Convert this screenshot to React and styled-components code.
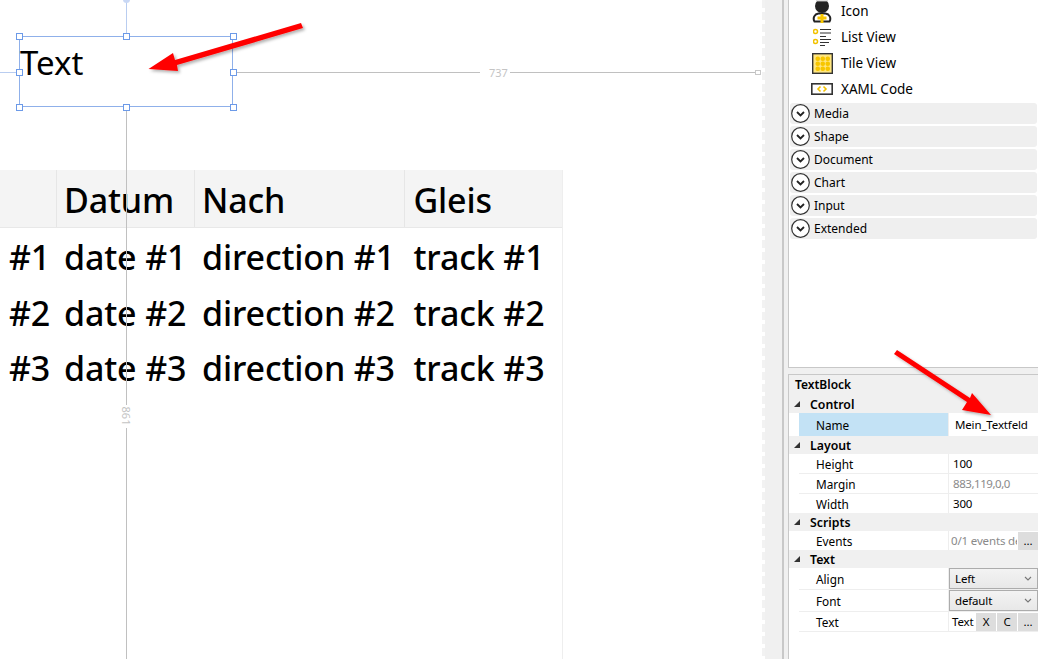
import React from "react";
import styled, { createGlobalStyle } from "styled-components";

const GlobalStyle = createGlobalStyle`
  html, body {
    margin: 0;
    padding: 0;
    background: #fff;
    overflow: hidden;
  }
  body {
    font-family: "Noto Sans", "Open Sans", sans-serif;
    color: #000;
  }
`;

const HANDLES = [
  [0, 0],
  [107, 0],
  [214, 0],
  [0, 36],
  [214, 36],
  [0, 71],
  [107, 71],
  [214, 71],
];

const COLUMNS = [
  { title: "", cell: "", width: 57, pad: 9 },
  { title: "Datum", cell: "date", width: 138, pad: 7 },
  { title: "Nach", cell: "direction", width: 210, pad: 7 },
  { title: "Gleis", cell: "track", width: 158, pad: 8.5 },
];

const TOOLS = [
  { name: "Icon", icon: <PersonIcon /> },
  { name: "List View", icon: <ListIcon /> },
  { name: "Tile View", icon: <TileIcon /> },
  { name: "XAML Code", icon: <CodeIcon /> },
];

const GROUPS = ["Media", "Shape", "Document", "Chart", "Input", "Extended"];

function PersonIcon() {
  return (
    <svg width="20" height="24" viewBox="0 0 20 24">
      <circle cx="10" cy="7" r="7" fill="#222" />
      <rect x="4" y="1" width="12" height="1.4" fill="#ddd" />
      <path
        d="M2.500 22.500c-2-3.500 0-7.500 4-8h7c4 .5 6 4.500 4 8z"
        fill="#fff"
        stroke="#222"
        strokeWidth="2"
      />
      <path d="M8.500 15h3v2.500h3v3h-3v3.500h-3v-3.500h-3v-3h3z" fill="#f7c600" />
    </svg>
  );
}

function ListIcon() {
  return (
    <svg width="18" height="18" viewBox="0 0 18 18">
      <circle cx="2.500" cy="3.500" r="2" fill="#fff" stroke="#f2c200" strokeWidth="1.500" />
      <circle cx="2.500" cy="13.500" r="2" fill="#fff" stroke="#f2c200" strokeWidth="1.500" />
      <path
        d="M7 1.500h11M7 5h11M7 8.500h6M7 11.500h11M7 14.500h9M7 17.500h5"
        stroke="#333"
        strokeWidth="1.200"
      />
    </svg>
  );
}

function TileIcon() {
  const dots = [];
  for (let r = 0; r < 3; r++) {
    for (let c = 0; c < 3; c++) {
      dots.push(<rect key={`${r}-${c}`} x={3.5 + c * 5} y={3.5 + r * 5} width="4.500" height="4.500" rx="2" fill="#f7c600" />);
    }
  }
  return (
    <svg width="21" height="21" viewBox="0 0 21 21">
      <rect x=".7" y=".7" width="19.600" height="19.600" fill="#ffe680" stroke="#333" strokeWidth="1.400" />
      {dots}
    </svg>
  );
}

function CodeIcon() {
  return (
    <svg width="22" height="12" viewBox="0 0 22 12">
      <rect x=".8" y=".8" width="20.400" height="10.400" fill="#fff" stroke="#333" strokeWidth="1.600" />
      <path d="M9.500 3.500L7 6l2.500 2.500M12.500 3.500L15 6l-2.500 2.500" fill="none" stroke="#f2c200" strokeWidth="1.600" />
    </svg>
  );
}

function ExpandIcon() {
  return (
    <svg width="19" height="19" viewBox="0 0 19 19">
      <circle cx="9.500" cy="9.500" r="8.800" fill="#fff" stroke="#333" strokeWidth="1.200" />
      <path d="M6 8l3.500 3.500L13 8" fill="none" stroke="#222" strokeWidth="1.800" />
    </svg>
  );
}

function Triangle() {
  return (
    <svg width="6" height="6" viewBox="0 0 6 6">
      <path d="M6 0v6H0z" fill="#333" />
    </svg>
  );
}

function Chevron() {
  return (
    <svg width="8" height="5" viewBox="0 0 8 5">
      <path d="M1 1l3 3 3-3" fill="none" stroke="#777" strokeWidth="1.100" />
    </svg>
  );
}

export default function App() {
  return (
    <Page>
      <GlobalStyle />
      <Canvas>
        <GuideV $top={0} $height={36} $color="#b9cdf0" />
        <GuideDot />
        <GuideH $left={0} $width={19} $top={72} $color="#b9cdf0" />
        <GuideH $left={233} $width={247} $top={72} />
        <GuideLabel $left={489} $top={65}>737</GuideLabel>
        <GuideH $left={510} $width={247} $top={72} />
        <GuideEnd />

        <Table>
          <HeaderRow>
            {COLUMNS.map((col) => (
              <HeaderCell key={col.width} $width={col.width} $pad={col.pad}>{col.title}</HeaderCell>
            ))}
          </HeaderRow>
          {[1, 2, 3].map((n) => (
            <BodyRow key={n}>
              {COLUMNS.map((col) => (
                <BodyCell key={col.width} $width={col.width} $pad={col.pad}>
                  {col.cell ? `${col.cell} #${n}` : `#${n}`}
                </BodyCell>
              ))}
            </BodyRow>
          ))}
        </Table>

        <GuideV $top={107} $height={298} />
        <GuideLabelV>861</GuideLabelV>
        <GuideV $top={428} $height={231} />

        <Selection>
          <SelectionText>Text</SelectionText>
          {HANDLES.map(([x, y]) => (
            <Handle key={`${x}-${y}`} style={{ left: x - 4, top: y - 4 }} />
          ))}
        </Selection>
      </Canvas>

      <DashedEdge />
      <Splitter />

      <Side>
        <Toolbox>
          <ToolList>
            {TOOLS.map((tool) => (
              <ToolRow key={tool.name}>
                <ToolIcon>{tool.icon}</ToolIcon>
                <span>{tool.name}</span>
              </ToolRow>
            ))}
          </ToolList>
          <Groups>
            {GROUPS.map((group) => (
              <GroupRow key={group}>
                <ExpandIcon />
                <span>{group}</span>
              </GroupRow>
            ))}
          </Groups>
        </Toolbox>

        <Properties>
          <PropTitle>TextBlock</PropTitle>

          <Section>
            <Triangle />
            <span>Control</span>
          </Section>
          <PropRow $height={23} $last>
            <PropName $selected>Name</PropName>
            <PropValue $pad={6}>Mein_Textfeld</PropValue>
          </PropRow>

          <Section>
            <Triangle />
            <span>Layout</span>
          </Section>
          <PropRow>
            <PropName>Height</PropName>
            <PropValue>100</PropValue>
          </PropRow>
          <PropRow>
            <PropName>Margin</PropName>
            <PropValue $muted $tight>883,119,0,0</PropValue>
          </PropRow>
          <PropRow $height={19} $last>
            <PropName>Width</PropName>
            <PropValue>300</PropValue>
          </PropRow>

          <Section>
            <Triangle />
            <span>Scripts</span>
          </Section>
          <PropRow $height={19} $last>
            <PropName>Events</PropName>
            <PropValue $pad={2} $muted>
              <EventsText>0/1 events de</EventsText>
              <SmallButton>...</SmallButton>
            </PropValue>
          </PropRow>

          <Section>
            <Triangle />
            <span>Text</span>
          </Section>
          <PropRow $height={22}>
            <PropName>Align</PropName>
            <PropValue $pad={0}>
              <Select>Left<Chevron /></Select>
            </PropValue>
          </PropRow>
          <PropRow $height={22}>
            <PropName>Font</PropName>
            <PropValue $pad={0}>
              <Select>default<Chevron /></Select>
            </PropValue>
          </PropRow>
          <PropRow $height={20}>
            <PropName>Text</PropName>
            <PropValue $pad={3}>
              <InlineText>Text</InlineText>
              <SmallButton>X</SmallButton>
              <SmallButton>C</SmallButton>
              <SmallButton>...</SmallButton>
            </PropValue>
          </PropRow>
        </Properties>
      </Side>

      <Arrows width="1038" height="659" viewBox="0 0 1038 659">
        <defs>
          <filter id="arrowShadow" x="-10%" y="-10%" width="130%" height="130%">
            <feDropShadow dx="2" dy="2" stdDeviation="1.500" floodColor="#000" floodOpacity=".3" />
          </filter>
        </defs>
        <path
          d="M301 23L303 28L177 65L178 71L148.500 69L173 53L175 60Z"
          fill="#f00"
          filter="url(#arrowShadow)"
        />
        <path
          d="M897 350L894 354L967 402L962 410L991 415L972 393L970 398Z"
          fill="#f00"
          filter="url(#arrowShadow)"
        />
      </Arrows>
    </Page>
  );
}

const Page = styled.div`
  position: relative;
  display: flex;
  width: 1038px;
  height: 659px;
  overflow: hidden;
  background: #fff;
`;

const Canvas = styled.div`
  position: relative;
  flex: 0 0 762px;
  height: 100%;
  overflow: hidden;
`;

const GuideV = styled.div`
  position: absolute;
  left: 126px;
  top: ${(p) => p.$top}px;
  width: 1px;
  height: ${(p) => p.$height}px;
  background: ${(p) => p.$color || "#c0c0c0"};
`;

const GuideH = styled.div`
  position: absolute;
  left: ${(p) => p.$left}px;
  top: ${(p) => p.$top}px;
  width: ${(p) => p.$width}px;
  height: 1px;
  background: ${(p) => p.$color || "#c0c0c0"};
`;

const GuideDot = styled.div`
  position: absolute;
  left: 123px;
  top: -4px;
  width: 7px;
  height: 7px;
  border-radius: 50%;
  background: #c9d8f5;
`;

const GuideEnd = styled.div`
  position: absolute;
  left: 755px;
  top: 70px;
  width: 4px;
  height: 3px;
  border: 1px solid #c8c8c8;
  background: #fff;
`;

const GuideLabel = styled.div`
  position: absolute;
  left: ${(p) => p.$left}px;
  top: ${(p) => p.$top}px;
  font-size: 11px;
  line-height: 16px;
  color: #c4c4c4;
`;

const GuideLabelV = styled(GuideLabel)`
  left: 117px;
  top: 408px;
  transform: rotate(90deg);
`;

const Table = styled.div`
  position: absolute;
  left: 0;
  top: 170px;
  width: 563px;
  height: 489px;
  border-right: 1px solid #eeeeee;
  box-sizing: border-box;
  font-size: 34px;
  font-weight: 500;
  letter-spacing: -0.15px;
`;

const HeaderRow = styled.div`
  display: flex;
  height: 58px;
  background: #f4f4f4;
  border-bottom: 1px solid #e8e8e8;
  box-sizing: border-box;
`;

const HeaderCell = styled.div`
  flex: 0 0 ${(p) => p.$width}px;
  box-sizing: border-box;
  padding-left: ${(p) => p.$pad}px;
  line-height: 60px;
  border-right: 1px solid #e6e6e6;
  white-space: nowrap;
  &:last-child {
    border-right: none;
  }
`;

const BodyRow = styled.div`
  display: flex;
  height: 55.5px;
`;

const BodyCell = styled.div`
  flex: 0 0 ${(p) => p.$width}px;
  box-sizing: border-box;
  padding-left: ${(p) => p.$pad}px;
  line-height: 58px;
  white-space: nowrap;
`;

const Selection = styled.div`
  position: absolute;
  left: 19px;
  top: 36px;
  width: 212px;
  height: 69px;
  border: 1px solid #8fb0ea;
`;

const SelectionText = styled.div`
  font-size: 33px;
  line-height: 52px;
`;

const Handle = styled.div`
  position: absolute;
  width: 5px;
  height: 5px;
  border: 1px solid #6c9ae8;
  background: #fff;
`;

const DashedEdge = styled.div`
  flex: 0 0 3px;
  background: repeating-linear-gradient(#f2f2f2 0 8px, #fff 8px 12px);
`;

const Splitter = styled.div`
  flex: 0 0 23px;
  box-sizing: border-box;
  background: linear-gradient(to right, #f0f0f0 17px, #c8c8c8 17px 19px, #f0f0f0 19px);
`;

const Side = styled.div`
  flex: 1;
  display: flex;
  flex-direction: column;
  min-width: 0;
  background: #f0f0f0;
  font-size: 13.500px;
`;

const Toolbox = styled.div`
  height: 368px;
  box-sizing: border-box;
  padding-left: 1px;
  background: #fff;
  border-left: 1px solid #c8c8c8;
  border-bottom: 1px solid #c8c8c8;
`;

const ToolList = styled.div`
  display: flex;
  flex-direction: column;
  margin-top: -2px;
`;

const ToolRow = styled.div`
  display: flex;
  align-items: center;
  gap: 8px;
  height: 26px;
  padding-left: 21px;
`;

const ToolIcon = styled.div`
  flex: 0 0 22px;
  display: flex;
  justify-content: center;
  align-items: center;
`;

const Groups = styled.div`
  display: flex;
  flex-direction: column;
  gap: 2px;
  margin: 1px 1px 0 0;
`;

const GroupRow = styled.div`
  display: flex;
  align-items: center;
  gap: 4px;
  height: 21px;
  padding-left: 1px;
  border-radius: 3px;
  background: #efefef;
  font-size: 12px;
`;

const Properties = styled.div`
  flex: 1;
  margin-top: 6px;
  background: #fff;
  border-left: 1px solid #c8c8c8;
  border-top: 1px solid #c8c8c8;
  font-size: 11.800px;
`;

const PropTitle = styled.div`
  height: 20px;
  padding-left: 6px;
  line-height: 20px;
  font-size: 12px;
  font-weight: 600;
  background: #f0f0f0;
`;

const Section = styled.div`
  display: flex;
  align-items: center;
  gap: 10px;
  height: 18px;
  padding-left: 5px;
  background: #f0f0f0;
  font-size: 12.300px;
  font-weight: 600;
`;

const PropRow = styled.div`
  display: flex;
  height: ${(p) => p.$height || 20}px;
  margin-left: 10px;
  box-sizing: border-box;
  border-bottom: ${(p) => (p.$last ? "none" : "1px solid #eeeeee")};
`;

const PropName = styled.div`
  flex: 0 0 150px;
  box-sizing: border-box;
  padding-left: 17px;
  display: flex;
  align-items: center;
  border-right: 1px solid #eeeeee;
  background: ${(p) => (p.$selected ? "#c3e2f5" : "transparent")};
`;

const PropValue = styled.div`
  flex: 1;
  min-width: 0;
  display: flex;
  align-items: center;
  padding-left: ${(p) => (p.$pad === undefined ? 4 : p.$pad)}px;
  font-size: 11.500px;
  letter-spacing: ${(p) => (p.$tight ? "-0.45px" : "-0.15px")};
  color: ${(p) => (p.$muted ? "#8a8a8a" : "#000")};
`;

const EventsText = styled.div`
  flex: 1;
  min-width: 0;
  overflow: hidden;
  white-space: nowrap;
`;

const InlineText = styled.div`
  flex: 1;
  min-width: 0;
`;

const SmallButton = styled.div`
  flex: 0 0 20px;
  height: 18px;
  margin-left: 1px;
  display: flex;
  align-items: center;
  justify-content: center;
  background: #dddddd;
  color: #000;
`;

const Select = styled.div`
  flex: 1;
  height: 21px;
  box-sizing: border-box;
  display: flex;
  align-items: center;
  justify-content: space-between;
  padding: 0 5px;
  border: 1px solid #acacac;
  background: linear-gradient(#f3f3f3, #e8e8e8);
`;

const Arrows = styled.svg`
  position: absolute;
  left: 0;
  top: 0;
  pointer-events: none;
`;
